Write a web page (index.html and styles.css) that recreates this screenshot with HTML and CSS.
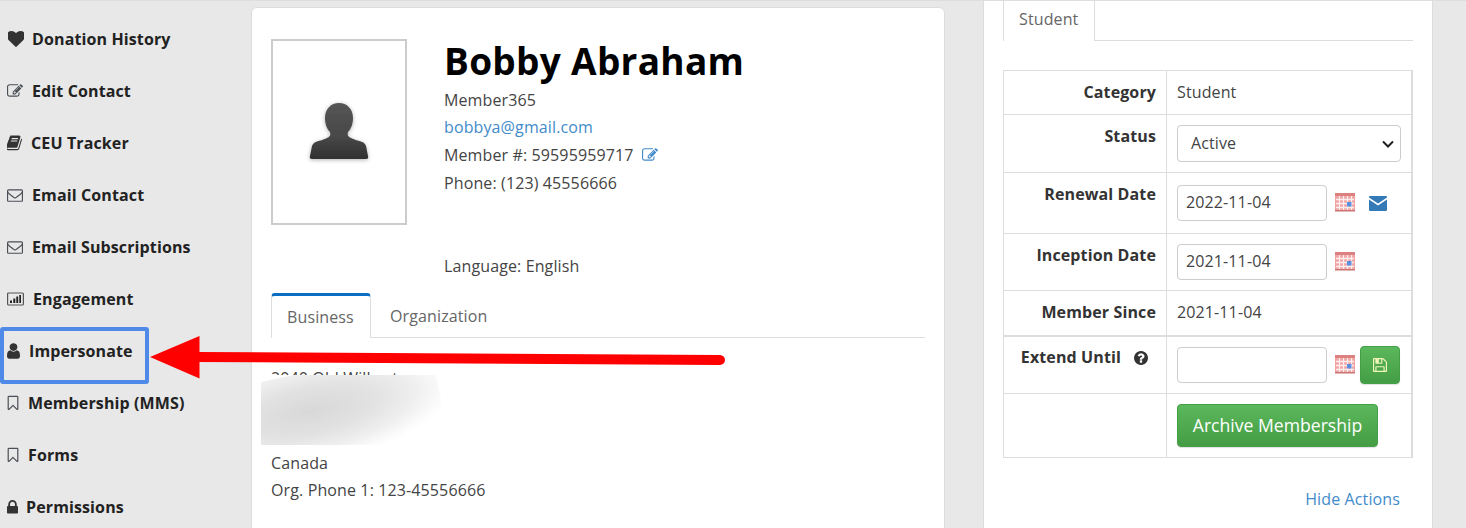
FILE: index.html
```html
<!DOCTYPE html>
<html lang="en">
<head>
<meta charset="utf-8">
<title>Bobby Abraham</title>
<link rel="stylesheet" href="styles.css">
</head>
<body>
<svg class="defs" width="0" height="0" aria-hidden="true">
  <defs>
    <g id="cal">
      <rect x="0" y="0" width="20" height="18" fill="#f0a3a3"/>
      <rect x="0" y="0" width="20" height="3" fill="#dc8080"/>
      <path d="M1 6.500h18M1 10.500h18M1 14.500h18M4.500 3v15M8.500 3v15M12.500 3v15M16.500 3v15" stroke="#fdeeee" stroke-width="1.300" fill="none"/>
      <rect x="12" y="9" width="4.500" height="4.500" fill="#5b8fe0"/>
      <rect x="0" y="17" width="20" height="1.500" fill="#cc7373"/>
    </g>
    <path id="fa-heart" d="M896 1664q-26 0-44-18l-624-602q-10-8-27.500-26t-55.500-65.500-68-97.500-53.500-121-23.500-138q0-220 127-344t351-124q62 0 126.500 21.500t120 58 95.500 68.500 76 68q36-36 76-68t95.500-68.500 120-58 126.500-21.500q224 0 351 124t127 344q0 221-229 450l-623 600q-18 18-44 18z"/>
    <path id="fa-edit" d="M888 1184l116-116-152-152-116 116v56h96v96h56zm440-720q-16-16-33 1l-350 350q-17 17-1 33t33-1l350-350q17-17 1-33zm80 594v190q0 119-84.500 203.500t-203.500 84.500h-832q-119 0-203.500-84.500t-84.500-203.500v-832q0-119 84.500-203.500t203.500-84.500h832q63 0 117 25 15 7 18 23 3 17-9 29l-49 49q-14 14-32 8-23-6-45-6h-832q-66 0-113 47t-47 113v832q0 66 47 113t113 47h832q66 0 113-47t47-113v-126q0-13 9-22l64-64q15-15 35-7t20 29zm-96-738l288 288-672 672h-288v-288zm444 132l-92 92-288-288 92-92q28-28 68-28t68 28l152 152q28 28 28 68t-28 68z"/>
    <path id="fa-book" d="M1639 478q40 57 18 129l-275 906q-19 64-76.500 107.500t-122.500 43.500h-923q-77 0-148.500-53.500t-99.500-131.500q-24-67-2-127 0-4 3-27t4-37q1-8-3-21.500t-3-19.500q2-11 8-21t16.500-23.500 16.500-23.500q23-38 45-91.500t30-91.500q3-10 .5-30t-.5-28q3-11 17-28t17-23q21-36 42-92t25-90q1-9-2.500-32t.5-28q4-13 22-30.500t22-22.500q19-26 42.500-84.500t27.500-96.500q1-8-3-25.500t-2-26.500q2-8 9-18t18-23 17-21q8-12 16.500-30.500t15-35 16-36 19.500-32 26.500-23.500 36-11.500 47.500 5.500l-1 3q38-9 51-9h761q74 0 114 56t18 130l-274 906q-36 119-71.500 153.500t-128.500 34.500h-869q-27 0-38 15-11 16-1 43 24 70 144 70h923q29 0 56-15.500t35-41.500l300-987q7-22 5-57 38 15 59 43zm-1064 2q-4 13 2 22.500t20 9.500h608q13 0 25.500-9.500t16.500-22.500l21-64q4-13-2-22.500t-20-9.500h-608q-13 0-25.500 9.500t-16.500 22.500zm-83 256q-4 13 2 22.500t20 9.500h608q13 0 25.500-9.500t16.500-22.500l21-64q4-13-2-22.500t-20-9.500h-608q-13 0-25.500 9.500t-16.500 22.500z"/>
    <path id="fa-env" d="M1664 1504v-768q-32 36-69 66-268 206-426 338-51 43-83 67t-86.500 48.500-102.500 24.500h-2q-48 0-102.500-24.500t-86.500-48.500-83-67q-158-132-426-338-37-30-69-66v768q0 13 9.500 22.500t22.500 9.500h1472q13 0 22.500-9.500t9.500-22.500zm0-1051v-24.500l-.5-13-3-12.500-5.500-9-9-7.500-14-2.500h-1472q-13 0-22.500 9.500t-9.500 22.500q0 168 147 284 193 152 401 317 6 5 35 29.500t46 37.500 44.500 31.500 50.500 27.500 43 9h2q20 0 43-9t50.500-27.500 44.500-31.500 46-37.500 35-29.500q208-165 401-317 54-43 100.500-115.500t46.500-131.500zm128-37v1088q0 66-47 113t-113 47h-1472q-66 0-113-47t-47-113v-1088q0-66 47-113t113-47h1472q66 0 113 47t47 113z"/>
    <path id="fa-user" d="M1536 1399q0 109-62.500 187t-150.500 78h-854q-88 0-150.500-78t-62.500-187q0-85 8.500-160.500t31.500-152 58.500-131 94-89 134.500-34.500q131 128 313 128t313-128q76 0 134.500 34.500t94 89 58.500 131 31.500 152 8.500 160.500zm-256-887q0 159-112.500 271.500t-271.500 112.500-271.500-112.500-112.500-271.500 112.500-271.500 271.500-112.500 271.500 112.500 112.500 271.500z"/>
    <path id="fa-mark" d="M1088 256H192v1242l359-345 89-85 89 85 359 345V256zM1100 128q23 0 44 9 33 13 52.500 41t19.500 62v1289q0 34-19.500 62t-52.500 41q-19 8-44 8-48 0-83-32l-377-362-377 362q-36 33-83 33-23 0-44-9-33-13-52.500-41t-19.500-62v-1289q0-34 19.500-62t52.500-41q21-9 44-9h920z"/>
    <path id="fa-lock" d="M640 768h512v-192q0-106-75-181t-181-75-181 75-75 181v192zm832 96v576q0 40-28 68t-68 28h-960q-40 0-68-28t-28-68v-576q0-40 28-68t68-28h32v-192q0-184 132-316t316-132 316 132 132 316v192h32q40 0 68 28t28 68z"/>
  </defs>
</svg>
<div class="page">
  <nav class="sidebar">
    <a class="item"><svg class="ic w16 nudge" viewBox="128 128 1536 1536"><use href="#fa-heart"/></svg><span class="lbl lbl8">Donation History</span></a>
    <a class="item"><svg class="ic w16 soft" viewBox="0 0 1792 1792"><use href="#fa-edit"/></svg><span class="lbl">Edit Contact</span></a>
    <a class="item"><svg class="ic w15" viewBox="100 128 1570 1570"><use href="#fa-book"/></svg><span class="lbl">CEU Tracker</span></a>
    <a class="item"><svg class="ic w16 soft" viewBox="0 0 1792 1792"><use href="#fa-env"/></svg><span class="lbl">Email Contact</span></a>
    <a class="item"><svg class="ic w16 soft" viewBox="0 0 1792 1792"><use href="#fa-env"/></svg><span class="lbl">Email Subscriptions</span></a>
    <a class="item"><svg class="ic w17" viewBox="0 0 17 16"><rect x=".6" y="2" width="15.800" height="12" rx="1" fill="none" stroke="#555" stroke-width="1.200"/><path d="M3 9.500h2V12H3zM6.300 7.500h2V12h-2zM9.300 5.500h1.900V12H9.300zM12.300 4h1.700v8h-1.700z" fill="#222"/></svg><span class="lbl">Engagement</span></a>
    <a class="item"><svg class="ic w13" viewBox="256 128 1280 1536"><use href="#fa-user"/></svg><span class="lbl">Impersonate</span></a>
    <a class="item"><svg class="ic w12 soft" viewBox="0 128 1280 1536"><use href="#fa-mark"/></svg><span class="lbl">Membership (MMS)</span></a>
    <a class="item"><svg class="ic w12 soft" viewBox="0 128 1280 1536"><use href="#fa-mark"/></svg><span class="lbl">Forms</span></a>
    <a class="item"><svg class="ic w11" viewBox="320 192 1152 1344"><use href="#fa-lock"/></svg><span class="lbl lbl8">Permissions</span></a>
  </nav>

  <main class="card">
    <section class="profile">
      <div class="photo">
        <svg class="avatar" viewBox="0 0 60 60" width="60" height="60">
          <defs>
            <filter id="softblur" x="-10%" y="-10%" width="120%" height="120%"><feGaussianBlur stdDeviation=".5"/></filter>
            <linearGradient id="gray" x1="0" y1="0" x2="0" y2="1"><stop offset="0" stop-color="#555"/><stop offset=".6" stop-color="#484848"/><stop offset="1" stop-color="#303030"/></linearGradient>
          </defs>
          <path filter="url(#softblur)" fill="url(#gray)" d="M30 1c-8 0-14 6-14 15 0 6 2 11 5 14 1 3 0 5-3 6-4 2-9 3-11 4-2 .5-3 2-4 4l-2 10c-.5 2 0 3 2 3h54c2 0 2.500-1 2-3l-2-10c-1-2-2-3.500-4-4-2-1-7-2-11-4-3-1-4-3-3-6 3-3 5-8 5-14 0-9-6-15-14-15z"/>
        </svg>
      </div>
      <div class="info">
        <h1 class="name">Bobby Abraham</h1>
        <div class="line">Member365</div>
        <div class="line"><a class="link">bobbya@gmail.com</a></div>
        <div class="line line28">Member #: 59595959717 <svg class="edit" viewBox="0 0 1792 1792"><use href="#fa-edit"/></svg></div>
        <div class="line line28">Phone: (123) 45556666</div>
        <div class="line lang">Language: English</div>
      </div>
    </section>
    <div class="tabs">
      <a class="tab active">Business</a>
      <a class="tab">Organization</a>
    </div>
    <div class="address">
      <div class="line addr1">2040 Old Wilbert</div>
      <div class="blur-slot"></div>
      <div class="line">Canada</div>
      <div class="line">Org. Phone 1: 123-45556666</div>
      <div class="blur"><div class="smudge"></div></div>
    </div>
  </main>

  <aside class="panel">
    <div class="tabs student-tabs">
      <a class="tab plain">Student</a>
    </div>
    <table class="details">
      <colgroup><col class="col-a"><col class="col-b"></colgroup>
      <tr class="r44"><th>Category</th><td class="val">Student</td></tr>
      <tr class="r58"><th>Status</th><td><select class="control select"><option>Active</option></select></td></tr>
      <tr class="r61"><th>Renewal Date</th><td class="shift"><div class="field"><input class="control date" value="2022-11-04"><svg class="cal" viewBox="0 0 20 20"><use href="#cal"/></svg><svg class="mail" viewBox="0 0 18 15"><path d="M1 0h16a1 1 0 0 1 1 1v.6L9 7.500 0 1.600V1a1 1 0 0 1 1-1zM0 3.600l9 5.900 9-5.900V14a1 1 0 0 1-1 1H1a1 1 0 0 1-1-1z" fill="#337ab7"/></svg></div></td></tr>
      <tr class="r57"><th>Inception Date</th><td><div class="field"><input class="control date" value="2021-11-04"><svg class="cal" viewBox="0 0 20 20"><use href="#cal"/></svg></div></td></tr>
      <tr class="r45"><th>Member Since</th><td class="val">2021-11-04</td></tr>
      <tr class="r58 thick"><th><span class="extend">Extend Until</span><svg class="help" viewBox="128 128 1536 1536"><path d="M1024 1376v-192q0-14-9-23t-23-9h-192q-14 0-23 9t-9 23v192q0 14 9 23t23 9h192q14 0 23-9t9-23zm256-672q0-88-55.500-163t-138.500-116-170-41q-243 0-371 213-15 24 8 42l132 100q7 6 19 6 16 0 25-12 53-68 86-92 34-24 86-24 48 0 85.500 26t37.500 59q0 38-20 61t-68 45q-63 28-115.500 86.500t-52.500 125.500v36q0 14 9 23t23 9h192q14 0 23-9t9-23q0-19 21.500-49.500t54.500-49.500q32-18 49-28.500t46-35 44.500-48 28-60.500 12.500-81zm384 192q0 209-103 385.500t-279.500 279.500-385.500 103-385.500-103-279.500-279.500-103-385.500 103-385.500 279.500-279.500 385.500-103 385.500 103 279.500 279.500 103 385.500z"/></svg></th><td class="extend-cell"><div class="field"><input class="control date"><svg class="cal" viewBox="0 0 20 20"><use href="#cal"/></svg><button class="btn save" aria-label="Save"><svg class="floppy" viewBox="128 128 1536 1536"><path d="M512 1536h768v-384h-768v384zm896 0h128v-896q0-14-10-38.500t-20-34.500l-281-281q-10-10-34-20t-39-10v416q0 40-28 68t-68 28h-576q-40 0-68-28t-28-68v-416h-128v1280h128v-416q0-40 28-68t68-28h832q40 0 68 28t28 68v416zm-384-928v-320q0-13-9.500-22.500t-22.500-9.500h-192q-13 0-22.500 9.500t-9.500 22.500v320q0 13 9.500 22.500t22.500 9.500h192q13 0 22.500-9.500t9.500-22.500zm640 32v928q0 40-28 68t-68 28h-1344q-40 0-68-28t-28-68v-1344q0-40 28-68t68-28h928q40 0 88 20t76 48l280 280q28 28 48 76t20 88z"/></svg></button></div></td></tr>
      <tr class="r64"><th></th><td><button class="btn archive">Archive Membership</button></td></tr>
    </table>
    <div class="actions"><a class="link">Hide Actions</a></div>
  </aside>
</div>

<div class="highlight"></div>
<svg class="arrow" viewBox="0 0 1466 528" width="1466" height="528" aria-hidden="true">
  <path d="M195 357 720 360" stroke="#f00" stroke-width="10" stroke-linecap="round" fill="none"/>
  <path d="M150 357 199.500 336V378.500z" fill="#f00"/>
</svg>
</body>
</html>
```
FILE: styles.css
```css
* { box-sizing: border-box; }
html, body { margin: 0; height: 528px; overflow: hidden; }
body {
  background: #e8e8e8;
  font-family: "Open Sans", "Noto Sans", sans-serif;
  font-size: 16px;
  letter-spacing: .12px;
  color: #444;
  position: relative;
}
.defs { position: absolute; }
.page { display: flex; align-items: flex-start; height: 528px; border-top: 1px solid #dedede; }

.sidebar { width: 251px; flex: none; padding: 12px 0 0 7px; }
.item {
  display: flex;
  align-items: center;
  height: 52px;
  font-weight: 700;
  color: #222;
  white-space: nowrap;
}
.ic { flex: none; fill: #333; height: 16px; }
.soft { fill: #4a4f55; }
.nudge { margin-left: 1px; }
.w16 { width: 16px; }
.w17 { width: 17px; }
.w15 { width: 15px; }
.w13 { width: 13px; }
.w12 { width: 12px; }
.w11 { width: 11px; }
.lbl { margin-left: 9px; }
.lbl8 { margin-left: 8px; }

.card {
  width: 694px;
  height: 540px;
  flex: none;
  margin-top: 6px;
  background: #fff;
  border: 1px solid #ddd;
  border-radius: 6px;
  padding: 31px 19px 0;
}
.profile { display: flex; height: 254px; }
.photo {
  width: 136px;
  height: 186px;
  flex: none;
  border: 2px solid #ccc;
  display: flex;
  align-items: center;
  justify-content: center;
}
.avatar { margin-top: 0; filter: drop-shadow(0 1px 2px rgba(0,0,0,.3)); }
.info { margin-left: 37px; }
.name {
  margin: 0;
  font-size: 37px;
  line-height: 44px;
  font-weight: 700;
  letter-spacing: .3px;
  color: #000;
}
.line { line-height: 27px; white-space: nowrap; }
.line28 { line-height: 28px; }
.info .name + .line { margin-top: 4px; }
.lang { margin-top: 56px; }
.link { color: #428bca; text-decoration: none; }
.edit { width: 16px; height: 16px; margin-left: 4px; vertical-align: -2px; fill: #428bca; }

.tabs { display: flex; height: 45px; border-bottom: 1px solid #ddd; }
.tab {
  display: flex;
  align-items: center;
  padding: 0 16px;
  color: #666;
  border: 1px solid transparent;
  border-bottom: 0;
}
.tab.active {
  height: 45px;
  width: 100px;
  color: #666;
  background: #fff;
  border-color: #ddd;
  border-top: 3px solid #0a6fc2;
  border-radius: 4px 4px 0 0;
  padding: 0 15px;
}
.tab.active + .tab { padding: 0 18px; }

.address { position: relative; padding-top: 27px; }
.addr1 { height: 27px; }
.blur-slot { height: 58px; }
.blur {
  position: absolute;
  left: -10px;
  top: 37px;
  width: 184px;
  height: 70px;
  background: #fff;
  overflow: hidden;
}
.smudge {
  position: absolute;
  left: -30px;
  top: -8px;
  width: 210px;
  height: 86px;
  background: radial-gradient(ellipse at 38% 45%, #d8d8d8 0%, #e2e2e2 35%, #efefef 58%, #fafafa 72%, #fff 80%);
  transform: rotate(-12deg);
}

.panel {
  width: 450px;
  height: 528px;
  flex: none;
  margin-left: 38px;
  background: #fff;
  border-left: 1px solid #ddd;
  border-right: 1px solid #ddd;
  padding: 0 19px;
}
.student-tabs { height: 40px; }
.tab.plain {
  width: 92px;
  height: 40px;
  padding: 0 15px 5px;
  border-color: #ddd;
  border-top: 0;
  background: #fff;
}
.details {
  width: 410px;
  margin-top: 29px;
  border-collapse: collapse;
  table-layout: fixed;
  border: 1px solid #ddd;
  border-right-width: 2px;
  color: #444;
}
.col-a { width: 163px; }
.details th, .details td {
  border: 1px solid #ddd;
  padding: 10px;
  vertical-align: top;
  line-height: 22px;
}
.details th { text-align: right; font-weight: 700; color: #333; white-space: nowrap; }
.r44 { height: 44px; }
.r45 { height: 45px; }
.r57 { height: 57px; }
.r58 { height: 58px; }
.r61 { height: 61px; }
.r64 { height: 64px; }
.thick th, .thick td { border-top-width: 2px; }
.thick th { padding-top: 9px; }
.extend { margin-right: 13px; }
.help { width: 14px; height: 14px; margin-right: 8px; vertical-align: -2px; fill: #333; }

.control {
  font-family: inherit;
  font-size: 16px;
  letter-spacing: .12px;
  color: #444;
  background: #fff;
  border: 1px solid #ccc;
  border-radius: 4px;
}
.select {
  width: 224px;
  height: 37px;
  padding: 0 13px 2px;
  display: block;
  appearance: none;
  background: #fff url("data:image/svg+xml,%3Csvg xmlns='http://www.w3.org/2000/svg' viewBox='0 0 12 8'%3E%3Cpath d='M1 1.500 6 6.500 11 1.500' fill='none' stroke='%23222' stroke-width='2'/%3E%3C/svg%3E") no-repeat right 6px center / 12px 8px;
}
.field { display: flex; align-items: center; height: 36px; }
.shift .field { margin-top: 2px; }
.date { width: 150px; height: 36px; padding: 0 8px 3px; }
.cal { width: 20px; height: 20px; margin-left: 8px; flex: none; }
.mail { width: 18px; height: 15px; margin-left: 14px; flex: none; }
.btn {
  font-family: inherit;
  font-size: 17.6px;
  letter-spacing: 0;
  color: #fff;
  border: 1px solid #43a047;
  border-radius: 4px;
  background: linear-gradient(#5cb85c, #449d44);
  box-shadow: 0 1px 1px rgba(0,0,0,.12);
}
.save {
  width: 40px;
  height: 38px;
  margin-left: 5px;
  display: flex;
  align-items: center;
  justify-content: center;
  padding: 0;
}
.floppy { width: 14px; height: 14px; fill: #f1f5b8; }
.archive { width: 201px; height: 43px; padding: 0 0 2px; display: block; }
.actions { text-align: right; padding: 30px 13px 0 0; line-height: 22px; }

.highlight {
  position: absolute;
  left: 0;
  top: 327px;
  width: 149px;
  height: 57px;
  border: 4px solid #4f8ae8;
  border-radius: 3px;
}
.arrow { position: absolute; left: 0; top: 0; pointer-events: none; }
```
